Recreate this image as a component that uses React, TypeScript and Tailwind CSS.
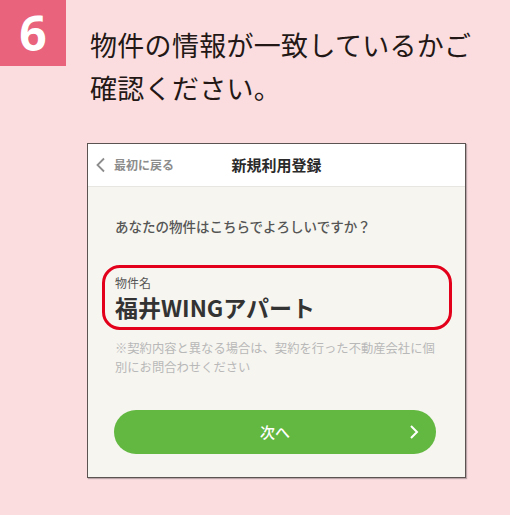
export default function App() {
  return (
    <div
      className="w-[510px] h-[515px] bg-[#fbdde0] relative overflow-hidden"
      style={{ fontFamily: '"Noto Sans CJK JP", "Noto Sans", sans-serif' }}
    >
      <div className="flex">
        <div className="w-[66px] h-[66px] bg-[#e9637c] flex items-center justify-center">
          <span
            className="text-white text-[48px] font-bold leading-[66px]"
            style={{ fontFamily: '"Open Sans", sans-serif' }}
          >
            6
          </span>
        </div>
        <p className="ml-[24px] mt-[23px] text-[27px] leading-[43px] text-[#231815] tracking-[0.3px]">
          物件の情報が一致しているかご
          <br />
          確認ください。
        </p>
      </div>

      <div className="ml-[87px] mt-[34px] w-[379px] h-[335px] border border-[#5b5252] bg-[#f6f5f0] flex flex-col shadow-[1px_1px_1px_rgba(0,0,0,0.25)]">
        <div className="h-[43px] bg-white border-b border-[#e8e6e1] relative flex items-center justify-center">
          <div className="absolute left-[7px] top-0 h-full flex items-center gap-[7px] text-[#8c8c8c]">
            <svg width="12" height="16" viewBox="0 0 12 16">
              <path d="M9 1.5 L2.5 8 L9 14.5" fill="none" stroke="#8c8c8c" strokeWidth="1.8" />
            </svg>
            <span className="text-[12px] font-bold">最初に戻る</span>
          </div>
          <span className="text-[15px] font-bold text-[#2a2a2a]">新規利用登録</span>
        </div>

        <p className="mt-[29px] ml-[27px] text-[13.5px] font-medium text-[#555]">
          あなたの物件はこちらでよろしいですか？
        </p>

        <div className="mt-[29px] ml-[14px] w-[350px] h-[65px] border-[3px] border-[#e2001a] rounded-[18px] px-[10px] pt-[6px]">
          <p className="text-[12px] leading-[18px] text-[#555]">物件名</p>
          <p className="text-[23px] leading-[30px] font-bold text-[#333]">福井WINGアパート</p>
        </div>

        <p className="mt-[9px] ml-[27px] mr-[30px] text-[12.3px] leading-[19px] text-[#b8b8b8]">
          ※契約内容と異なる場合は、契約を行った不動産会社に個別にお問合わせください
        </p>

        <div className="mt-[33px] ml-[26px] w-[322px] h-[44px] rounded-full bg-[#63b841] relative flex items-center justify-center">
          <span className="text-white text-[15px] font-medium">次へ</span>
          <svg className="absolute right-[17px]" width="10" height="16" viewBox="0 0 10 16">
            <path d="M2 2 L8 8 L2 14" fill="none" stroke="white" strokeWidth="2" />
          </svg>
        </div>
      </div>
    </div>
  );
}
